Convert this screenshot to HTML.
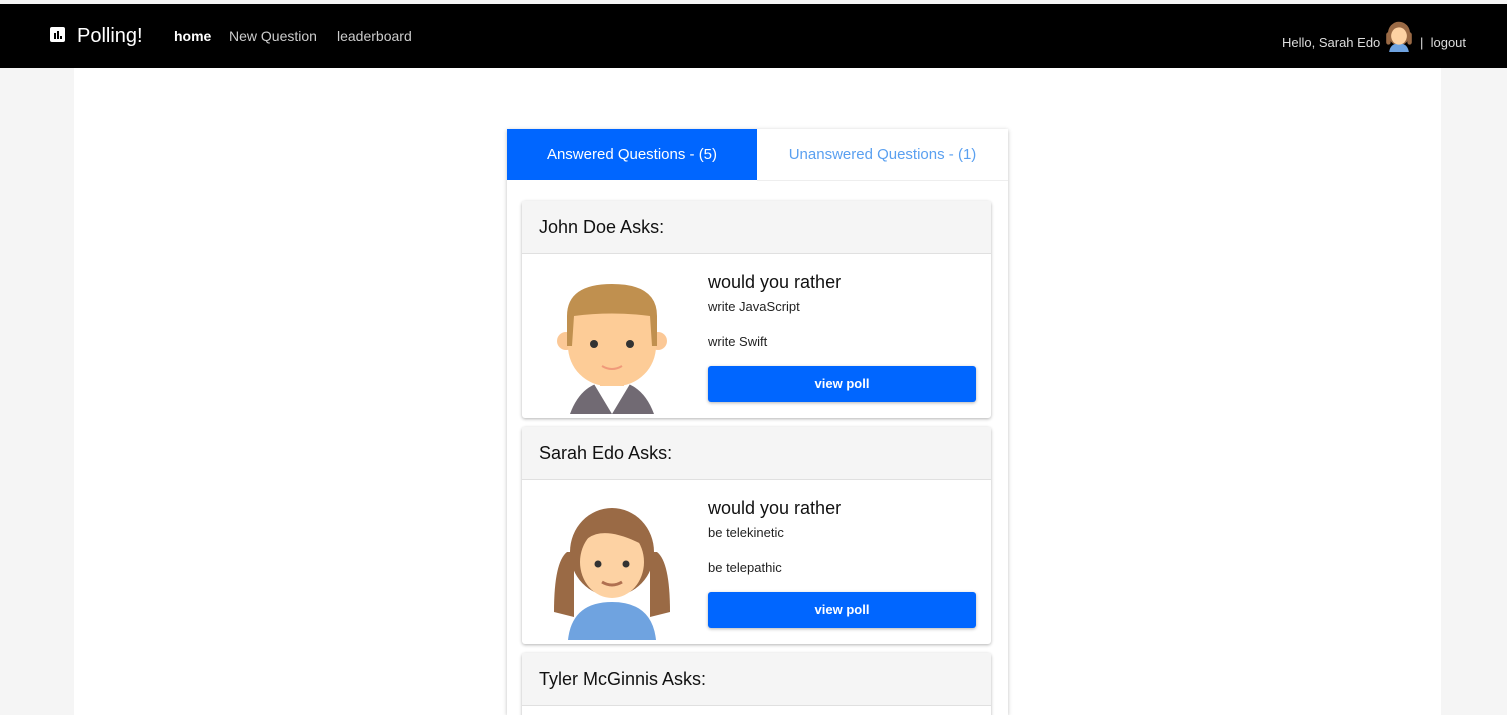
<!DOCTYPE html>
<html style="overflow:hidden;height:715px"><head><style>
body{margin:0;background:#f5f5f5;font-family:"Liberation Sans",sans-serif;width:1507px;height:715px;overflow:hidden;position:relative}
.nav{position:absolute;top:4px;left:0;width:1507px;height:64px;background:#000;color:#fff}
.main{position:absolute;left:74px;top:68px;width:1367px;height:647px;background:#fff}
.box{position:absolute;left:507px;top:129px;width:501px;height:586px;background:#fff;box-shadow:0 1px 4px rgba(0,0,0,.25);overflow:hidden}
.tab{position:absolute;top:0;height:51px;line-height:51px;text-align:center;font-size:15px}
.card{position:absolute;left:15px;width:469px;background:#fff;border-radius:3px;box-shadow:0 1px 3px rgba(0,0,0,.3)}
.ch{height:52px;background:#f5f5f5;border-bottom:1px solid #e0e0e0;line-height:52px;padding-left:17px;font-size:18px;color:#111}
.wyr{position:absolute;left:186px;top:18px;font-size:18px;color:#111}
.o1{position:absolute;left:186px;top:45px;font-size:13px;color:#222}
.o2{position:absolute;left:186px;top:80px;font-size:13px;color:#222}
.btn{position:absolute;left:186px;top:112px;width:268px;height:36px;background:#0066ff;border-radius:3px;color:#fff;font-size:13px;font-weight:bold;text-align:center;line-height:36px;box-shadow:0 1px 3px rgba(0,0,0,.3)}
.av{position:absolute;left:30px;top:12px}
</style></head><body>
<div class="nav">
<div style="position:absolute;left:50px;top:23px;width:15px;height:15px;background:#fff;border-radius:2px"><div style="position:absolute;left:4px;top:6px;width:2px;height:6px;background:#000"></div><div style="position:absolute;left:7px;top:4px;width:2px;height:8px;background:#000"></div><div style="position:absolute;left:10px;top:9px;width:2px;height:3px;background:#000"></div></div>
<div style="position:absolute;left:77px;top:21px;font-size:20px">Polling!</div>
<div style="position:absolute;left:174px;top:24px;font-size:14px;font-weight:bold">home</div>
<div style="position:absolute;left:229px;top:24px;font-size:14px;color:#ccc">New Question</div>
<div style="position:absolute;left:337px;top:24px;font-size:14px;color:#ccc">leaderboard</div>
<div style="position:absolute;left:1282px;top:31px;font-size:13px;color:#ddd">Hello, Sarah Edo</div>
<svg style="position:absolute;left:1384px;top:16px" width="30" height="32" viewBox="0 0 120 130"><ellipse cx="60" cy="55" rx="45" ry="48" fill="#9a6a45"/><rect x="8" y="50" width="18" height="50" rx="9" fill="#9a6a45"/><rect x="94" y="50" width="18" height="50" rx="9" fill="#9a6a45"/><path d="M20 130 Q25 95 60 95 Q95 95 100 130Z" fill="#6fa3e0"/><ellipse cx="60" cy="65" rx="32" ry="35" fill="#fdd2a3"/></svg>
<div style="position:absolute;left:1420px;top:31px;font-size:13px;color:#ddd">|&nbsp; logout</div>
</div>
<div class="main"></div>
<div class="box">
<div class="tab" style="left:0;width:250px;background:#0066ff;color:#fff">Answered Questions - (5)</div>
<div class="tab" style="left:250px;width:251px;color:#5aa0f0;border-bottom:1px solid #eee">Unanswered Questions - (1)</div>
<div class="card" style="top:72px;height:217px"><div class="ch">John Doe Asks:</div><div style="position:relative">
<svg class="av" width="120" height="150" viewBox="0 0 120 150"><path d="M18 148 Q30 115 60 115 Q90 115 102 148Z" fill="#716a73"/><path d="M42 118 L60 148 L78 118Z" fill="#fff"/><rect x="48" y="95" width="24" height="25" fill="#fbc896"/><circle cx="14" cy="75" r="9" fill="#fbc896"/><circle cx="106" cy="75" r="9" fill="#fbc896"/><rect x="16" y="30" width="88" height="90" rx="40" fill="#fdcc97"/><path d="M15 80 L15 50 Q15 18 60 18 Q105 18 105 50 L105 80 L100 80 L98 50 Q60 45 22 50 L20 80Z" fill="#c0904f"/><circle cx="42" cy="78" r="4" fill="#333"/><circle cx="78" cy="78" r="4" fill="#333"/><path d="M50 100 Q60 106 70 100" stroke="#f09a7a" stroke-width="2" fill="none"/></svg>
<div class="wyr">would you rather</div><div class="o1">write JavaScript</div><div class="o2">write Swift</div><div class="btn">view poll</div></div></div>
<div class="card" style="top:298px;height:217px"><div class="ch">Sarah Edo Asks:</div><div style="position:relative">
<svg class="av" width="120" height="150" viewBox="0 0 120 150"><ellipse cx="60" cy="60" rx="42" ry="44" fill="#9a6a45"/><path d="M2 120 Q2 70 15 60 L22 60 L22 125Z" fill="#9a6a45"/><path d="M118 120 Q118 70 105 60 L98 60 L98 125Z" fill="#9a6a45"/><path d="M16 148 Q20 110 60 110 Q100 110 104 148Z" fill="#6fa3e0"/><ellipse cx="60" cy="70" rx="32" ry="36" fill="#fdd2a3"/><path d="M26 60 Q40 25 95 55 L95 40 Q60 10 26 40Z" fill="#9a6a45"/><circle cx="46" cy="72" r="3.5" fill="#333"/><circle cx="74" cy="72" r="3.5" fill="#333"/><path d="M50 90 Q60 96 70 90" stroke="#b07050" stroke-width="3" fill="none"/></svg>
<div class="wyr">would you rather</div><div class="o1">be telekinetic</div><div class="o2">be telepathic</div><div class="btn">view poll</div></div></div>
<div class="card" style="top:524px;height:120px"><div class="ch">Tyler McGinnis Asks:</div></div>
</div>
</body></html>
